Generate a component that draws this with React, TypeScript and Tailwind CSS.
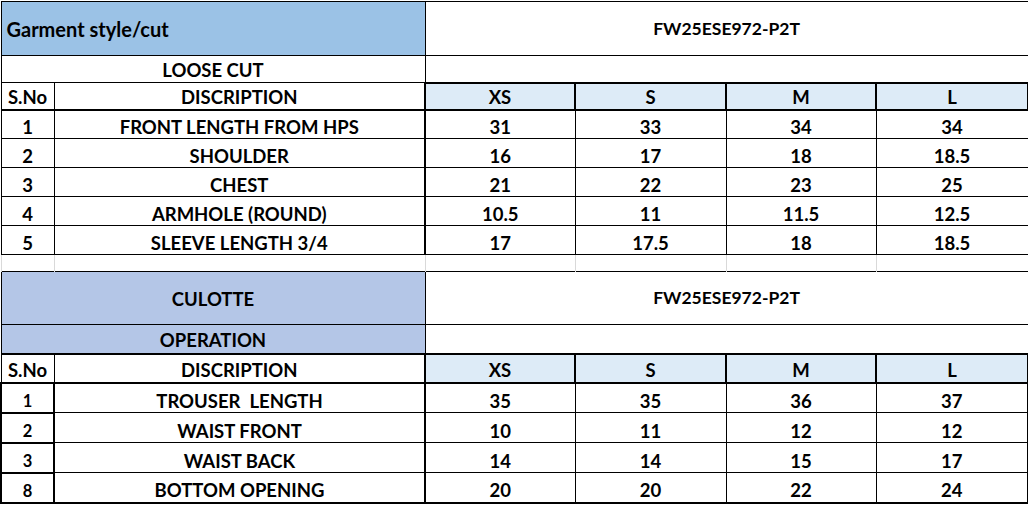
import React from 'react';

const sizes = ['XS', 'S', 'M', 'L'];

const looseCut = [
  ['1', 'FRONT LENGTH FROM HPS', '31', '33', '34', '34'],
  ['2', 'SHOULDER', '16', '17', '18', '18.5'],
  ['3', 'CHEST', '21', '22', '23', '25'],
  ['4', 'ARMHOLE (ROUND)', '10.5', '11', '11.5', '12.5'],
  ['5', 'SLEEVE LENGTH 3/4', '17', '17.5', '18', '18.5'],
];

const culotte = [
  ['1', 'TROUSER  LENGTH', '35', '35', '36', '37'],
  ['2', 'WAIST FRONT', '10', '11', '12', '12'],
  ['3', 'WAIST BACK', '14', '14', '15', '17'],
  ['8', 'BOTTOM OPENING', '20', '20', '22', '24'],
];

const cell = 'border border-black text-center align-bottom whitespace-pre';

export default function App() {
  return (
    <div className="bg-white w-[1028px] h-[507px] overflow-hidden pt-[1px] font-['Lato',sans-serif] font-bold text-[18.5px] text-black leading-none">
      <table className="table-fixed border-collapse w-[1027px]">
        <colgroup>
          <col className="w-[53px]" />
          <col className="w-[371px]" />
          <col className="w-[150px]" />
          <col className="w-[151px]" />
          <col className="w-[150px]" />
          <col className="w-[152px]" />
        </colgroup>
        <tbody>
          {/* loose cut block */}
          <tr className="h-[54px]">
            <td colSpan={2} className="border border-black bg-[#9bc2e6] text-left align-middle pl-[5px] text-[20px]">
              Garment style/cut
            </td>
            <td colSpan={4} className="border border-black text-center align-middle text-[17.5px]">
              FW25ESE972-P2T
            </td>
          </tr>
          <tr className="h-[27px]">
            <td colSpan={2} className={`${cell} pb-[3px]`}>LOOSE CUT</td>
            <td colSpan={4} className="border border-black" />
          </tr>
          <tr className="h-[27px]">
            <td className={`${cell} pb-[2px] border-b-2`}>S.No</td>
            <td className={`${cell} pb-[2px] border-b-2 border-r-2`}>DISCRIPTION</td>
            {sizes.map((s) => (
              <td key={s} className={`${cell} pb-[2px] border-2 bg-[#ddebf7]`}>{s}</td>
            ))}
          </tr>
          {looseCut.map((r) => (
            <tr key={r[0]} className="h-[29px]">
              <td className={`${cell} pb-[2px]`}>{r[0]}</td>
              <td className={`${cell} pb-[2px] border-r-2`}>{r[1]}</td>
              {r.slice(2).map((v, i) => (
                <td key={i} className={`${cell} pb-[2px]`}>{v}</td>
              ))}
            </tr>
          ))}

          {/* spacer row with sheet gridlines */}
          <tr className="h-[17px]">
            <td className="border-x border-[#d9d9d9]" />
            <td className="border-x border-[#d9d9d9]" />
            <td className="border-x border-[#d9d9d9]" />
            <td className="border-x border-[#d9d9d9]" />
            <td className="border-x border-[#d9d9d9]" />
            <td className="border-x border-[#d9d9d9]" />
          </tr>

          {/* culotte block */}
          <tr className="h-[53px]">
            <td colSpan={2} className="border border-black bg-[#b4c6e7] text-center align-middle pt-[2px]">
              CULOTTE
            </td>
            <td colSpan={4} className="border border-black text-center align-middle text-[17.5px]">
              FW25ESE972-P2T
            </td>
          </tr>
          <tr className="h-[29px]">
            <td colSpan={2} className={`${cell} pb-[3px] bg-[#b4c6e7]`}>OPERATION</td>
            <td colSpan={4} className="border border-black" />
          </tr>
          <tr className="h-[29px]">
            <td className={`${cell} pb-[2px] border-t-2 border-b-2`}>S.No</td>
            <td className={`${cell} pb-[2px] border-t-2 border-b-2 border-r-2`}>DISCRIPTION</td>
            {sizes.map((s) => (
              <td key={s} className={`${cell} pb-[2px] border-2 bg-[#ddebf7]`}>{s}</td>
            ))}
          </tr>
          {culotte.map((r, idx) => (
            <tr key={r[0]} className="h-[30px]">
              <td className={`${cell} pb-[2px] border-2 text-[16.5px]`}>{r[0]}</td>
              <td className={`${cell} pb-[2px] border-r-2 ${idx === culotte.length - 1 ? 'border-b-2' : ''}`}>{r[1]}</td>
              {r.slice(2).map((v, i) => (
                <td key={i} className={`${cell} pb-[2px] ${i === 3 ? 'border-r-2' : ''} ${idx === culotte.length - 1 ? 'border-b-2' : ''}`}>{v}</td>
              ))}
            </tr>
          ))}
        </tbody>
      </table>
    </div>
  );
}
